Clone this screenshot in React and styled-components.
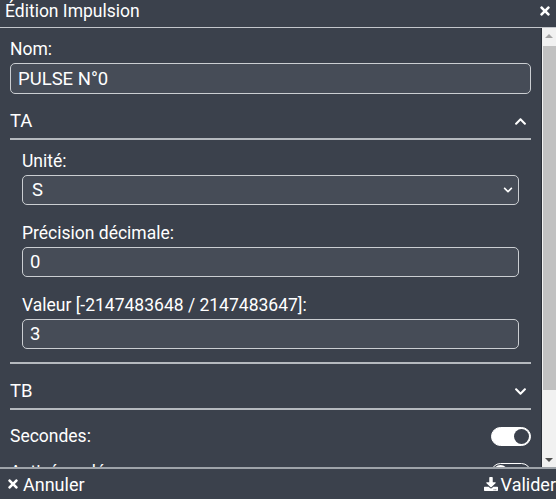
import React from 'react';
import styled, {createGlobalStyle} from 'styled-components';
import {FaTimes, FaChevronUp, FaChevronDown, FaDownload} from 'react-icons/fa';

const GlobalStyle = createGlobalStyle`
  html, body {
    margin: 0;
    padding: 0;
    background: #3b414c;
    overflow: hidden;
  }
  * { box-sizing: border-box; }
`

const Window = styled.div`
  height: 499px;
  display: flex;
  flex-direction: column;
  background: #3b414c;
  color: #fff;
  font-family: Roboto, "Noto Sans", sans-serif;
`

const TitleBar = styled.div`
  height: 28px;
  flex: none;
  display: flex;
  align-items: center;
  justify-content: space-between;
  padding: 0 4px 5px 5px;
  font-size: 17.5px;
  border-bottom: 1px solid #c3c6cb;
`

const Main = styled.div`
  flex: 1;
  min-height: 0;
  display: flex;
`

const Body = styled.div`
  flex: 1;
  min-width: 0;
  overflow: hidden;
  padding: 11px 10px 24px 10px;
`

// classic scrollbar look (the browser hides native ones)
const ScrollBar = styled.div`
  width: 15px;
  flex: none;
  display: flex;
  flex-direction: column;
  background: #f1f1f1;
  border-left: 1px solid #2a2f37;
`

const ScrollButton = styled.div`
  height: 15px;
  flex: none;
  display: flex;
  align-items: center;
  justify-content: center;
`

const Arrow = styled.div`
  width: 0;
  height: 0;
  border-left: 4px solid transparent;
  border-right: 4px solid transparent;
  ${p => p.$up
    ? `border-bottom: 4px solid #a3a3a3;`
    : `border-top: 4px solid #505050;`}
`

const Track = styled.div`
  flex: 1;
  padding: 3px 0 0 1px;
`

const Thumb = styled.div`
  height: 344px;
  background: #c1c1c1;
`

const Field = styled.div`
  display: flex;
  flex-direction: column;
  margin-bottom: ${p => p.$gap ?? 18}px;
`

const Label = styled.label`
  font-size: 17.5px;
  line-height: 20px;
  margin-bottom: 4px;
`

const Input = styled.input`
  height: ${p => p.$h || 30}px;
  background: #464c57;
  border: 1px solid #cbced2;
  border-radius: 5px;
  color: #fff;
  font-family: inherit;
  font-size: 18.5px;
  padding: 0 7px;
  outline: none;
`

const SelectWrap = styled.div`
  position: relative;
`

const Select = styled.select`
  width: 100%;
  height: 30px;
  appearance: none;
  background: #464c57;
  border: 1px solid #cbced2;
  border-radius: 5px;
  color: #fff;
  font-family: inherit;
  font-size: 18.5px;
  padding: 0 9px;
  outline: none;
`

const SelectArrow = styled.span`
  position: absolute;
  right: 6px;
  top: 10px;
  display: flex;
  pointer-events: none;
`

const SectionHeader = styled.div`
  display: flex;
  align-items: center;
  justify-content: space-between;
  padding: 16px 4px 6px 0;
  font-size: 18.5px;
  line-height: 22px;
  border-bottom: 2px solid #b5b9be;
`

const SectionBody = styled.div`
  padding: 11px 12px 13px 12px;
  border-bottom: 2px solid #b5b9be;
`

const ToggleRow = styled.div`
  display: flex;
  align-items: center;
  justify-content: space-between;
  height: 36px;
  font-size: 17.5px;
  margin-top: ${p => p.$top || 0}px;
`

const Toggle = styled.div`
  width: 40px;
  height: 19px;
  border-radius: 10px;
  background: ${p => (p.$on ? '#fff' : '#3b414c')};
  border: 1px solid #fff;
  display: flex;
  align-items: center;
  justify-content: ${p => (p.$on ? 'flex-end' : 'flex-start')};
  padding: 1px;
`

const Knob = styled.div`
  width: 15px;
  height: 15px;
  border-radius: 50%;
  background: ${p => (p.$on ? '#3b414c' : '#fff')};
`

const Footer = styled.div`
  height: 32px;
  flex: none;
  display: flex;
  align-items: center;
  justify-content: space-between;
  border-top: 2px solid #9ea3a9;
  font-size: 18px;
  padding: 0 0 0 6px;
`

const FooterButton = styled.div`
  display: flex;
  align-items: center;
  gap: 3px;
`

const App = () => {
    return (
        <Window>
            <GlobalStyle/>
            <TitleBar>
                <span>Édition Impulsion</span>
                <FaTimes size={14}/>
            </TitleBar>
            <Main>
                <Body>
                    <Field $gap={0}>
                        <Label>Nom:</Label>
                        <Input $h={31} defaultValue="PULSE N°0"/>
                    </Field>

                    <SectionHeader>
                        <span>TA</span>
                        <FaChevronUp size={13}/>
                    </SectionHeader>
                    <SectionBody>
                        <Field>
                            <Label>Unité:</Label>
                            <SelectWrap>
                                <Select defaultValue="S">
                                    <option value="S">S</option>
                                    <option value="MS">MS</option>
                                </Select>
                                <SelectArrow><FaChevronDown size={10}/></SelectArrow>
                            </SelectWrap>
                        </Field>
                        <Field>
                            <Label>Précision décimale:</Label>
                            <Input defaultValue="0"/>
                        </Field>
                        <Field $gap={0}>
                            <Label>Valeur [-2147483648 / 2147483647]:</Label>
                            <Input defaultValue="3"/>
                        </Field>
                    </SectionBody>

                    <SectionHeader>
                        <span>TB</span>
                        <FaChevronDown size={13}/>
                    </SectionHeader>

                    <ToggleRow $top={8}>
                        <span>Secondes:</span>
                        <Toggle $on><Knob $on/></Toggle>
                    </ToggleRow>
                    <ToggleRow>
                        <span>Activé au démarrage:</span>
                        <Toggle><Knob/></Toggle>
                    </ToggleRow>
                    <ToggleRow>
                        <span>Inversé:</span>
                        <Toggle><Knob/></Toggle>
                    </ToggleRow>
                </Body>
                <ScrollBar>
                    <ScrollButton><Arrow $up/></ScrollButton>
                    <Track><Thumb/></Track>
                    <ScrollButton><Arrow/></ScrollButton>
                </ScrollBar>
            </Main>
            <Footer>
                <FooterButton>
                    <FaTimes size={14}/>
                    <span>Annuler</span>
                </FooterButton>
                <FooterButton>
                    <FaDownload size={14}/>
                    <span>Valider</span>
                </FooterButton>
            </Footer>
        </Window>
    );
}

export default App;
